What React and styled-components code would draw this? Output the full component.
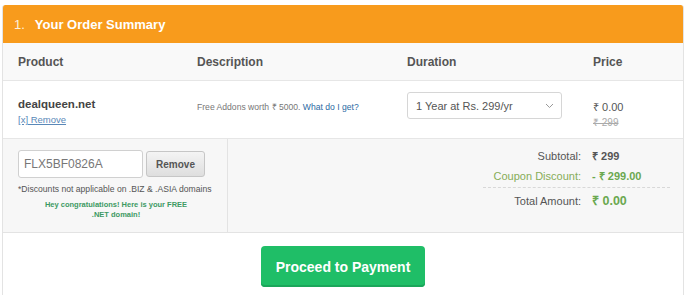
import styled, { createGlobalStyle } from "styled-components";

const GlobalStyle = createGlobalStyle`
  body {
    margin: 0;
    background: #fff;
    font-family: "Liberation Sans", Arial, sans-serif;
  }
`;

const Page = styled.div`
  padding: 5px 0 0 2px;
  width: 682px;
`;

const Card = styled.div`
  border: 1px solid #e3e3e3;
  border-top: 0;
  border-radius: 3px 3px 0 0;
  overflow: hidden;
`;

const Header = styled.div`
  height: 38px;
  background: #f89b1c;
  color: #fff;
  display: flex;
  align-items: center;
  padding-left: 12px;
  font-size: 13px;
  border-radius: 3px 3px 0 0;
  margin: 0 -1px;
`;

const Step = styled.span`
  opacity: 0.85;
  margin-right: 10px;
`;

const Title = styled.span`
  font-weight: bold;
`;

const Row = styled.div`
  display: grid;
  grid-template-columns: 179px 210px 186px 1fr;
  align-items: ${({ top }) => (top ? "start" : "center")};
  padding: ${({ top }) => (top ? "11px 0 0 15px" : "0 0 0 15px")};
  box-sizing: border-box;
  height: ${({ h }) => h}px;
  background: ${({ bg }) => bg || "#fff"};
  border-bottom: 1px solid #e6e6e6;
`;

const HeadCell = styled.div`
  font-size: 12px;
  font-weight: bold;
  color: #555;
`;

const Cell = styled.div`
  display: flex;
  flex-direction: column;
  margin-top: ${({ offset }) => offset || 0}px;
`;

const Domain = styled.div`
  font-size: 11.5px;
  font-weight: bold;
  color: #444;
`;

const SmallLink = styled.a`
  font-size: 9.5px;
  color: #5a88b8;
  text-decoration: underline;
  margin-top: 4px;
`;

const Desc = styled.div`
  font-size: 8.6px;
  color: #777;
  margin-top: 9px;
`;

const DescLink = styled.a`
  color: #2b6aa3;
`;

const Select = styled.div`
  width: 155px;
  height: 27px;
  box-sizing: border-box;
  border: 1px solid #d6d6d6;
  border-radius: 3px;
  display: flex;
  align-items: center;
  justify-content: space-between;
  padding: 0 7px 0 8px;
  font-size: 11px;
  color: #555;
  background: #fff;
`;

const Price = styled.div`
  font-size: 11px;
  color: #555;
`;

const OldPrice = styled.div`
  font-size: 10px;
  color: #aaa;
  text-decoration: line-through;
  margin-top: 1px;
`;

const CouponSection = styled.div`
  display: flex;
  height: 93px;
  background: #f7f7f7;
  border-bottom: 1px solid #e3e3e3;
`;

const CouponLeft = styled.div`
  width: 225px;
  box-sizing: border-box;
  border-right: 1px solid #e3e3e3;
  padding: 11px 0 0 15px;
`;

const CouponRow = styled.div`
  display: flex;
  align-items: center;
  gap: 3px;
`;

const CouponInput = styled.div`
  width: 125px;
  height: 28px;
  box-sizing: border-box;
  background: #fff;
  border: 1px solid #d0d0d0;
  border-radius: 3px;
  display: flex;
  align-items: center;
  padding-left: 5px;
  font-size: 12px;
  color: #777;
`;

const GrayButton = styled.button`
  width: 59px;
  height: 26px;
  border: 1px solid #c6c6c6;
  border-radius: 3px;
  background: linear-gradient(#f4f4f4, #dedede);
  font-family: inherit;
  font-size: 10px;
  font-weight: bold;
  color: #555;
  padding: 0;
`;

const Note = styled.div`
  font-size: 8.6px;
  color: #555;
  margin-top: 6px;
  white-space: nowrap;
`;

const Congrats = styled.div`
  width: 196px;
  text-align: center;
  font-size: 7.5px;
  font-weight: bold;
  color: #3d9a63;
  line-height: 10px;
  margin-top: 6px;
`;

const CouponRight = styled.div`
  flex: 1;
  display: flex;
  justify-content: flex-end;
  padding: 7px 13px 0 0;
`;

const Summary = styled.div`
  width: 187px;
  display: grid;
  grid-template-columns: 98px 78px;
  column-gap: 11px;
  align-content: start;
`;

const Label = styled.div`
  text-align: right;
  font-size: 11px;
  line-height: 20px;
  color: ${({ green }) => (green ? "#86ad57" : "#555")};
  white-space: nowrap;
`;

const Value = styled.div`
  font-size: ${({ big }) => (big ? "12.5px" : "11px")};
  line-height: 20px;
  font-weight: bold;
  color: ${({ green }) => (green ? "#6aa84f" : "#555")};
  white-space: nowrap;
`;

const Divider = styled.div`
  grid-column: 1 / -1;
  border-top: 1px dashed #d8d8d8;
  margin: 1px 0 3px;
`;

const Footer = styled.div`
  display: flex;
  justify-content: center;
  padding: 13px 0 20px;
`;

const PayButton = styled.button`
  width: 164px;
  height: 41px;
  border: 0;
  border-radius: 4px;
  background: #1fbe67;
  box-shadow: inset 0 -2px 0 #1aa65a;
  color: #fff;
  font-family: inherit;
  font-size: 14px;
  font-weight: bold;
`;

const Chevron = () => (
  <svg width="9" height="6" viewBox="0 0 9 6">
    <polyline points="1,1 4.5,4.5 8,1" fill="none" stroke="#999" strokeWidth="1" />
  </svg>
);

export default function App() {
  return (
    <>
      <GlobalStyle />
      <Page>
        <Card>
          <Header>
            <Step>1.</Step>
            <Title>Your Order Summary</Title>
          </Header>
          <Row h={38} bg="#f9f9f9">
            <HeadCell>Product</HeadCell>
            <HeadCell>Description</HeadCell>
            <HeadCell>Duration</HeadCell>
            <HeadCell>Price</HeadCell>
          </Row>
          <Row h={58} top>
            <Cell offset={6}>
              <Domain>dealqueen.net</Domain>
              <SmallLink>[x] Remove</SmallLink>
            </Cell>
            <Desc>
              Free Addons worth ₹ 5000. <DescLink>What do I get?</DescLink>
            </Desc>
            <Select>
              <span>1 Year at Rs. 299/yr</span>
              <Chevron />
            </Select>
            <Cell offset={7}>
              <Price>₹ 0.00</Price>
              <OldPrice>₹ 299</OldPrice>
            </Cell>
          </Row>
          <CouponSection>
            <CouponLeft>
              <CouponRow>
                <CouponInput>FLX5BF0826A</CouponInput>
                <GrayButton>Remove</GrayButton>
              </CouponRow>
              <Note>*Discounts not applicable on .BIZ &amp; .ASIA domains</Note>
              <Congrats>
                Hey congratulations! Here is your FREE
                <br />
                .NET domain!
              </Congrats>
            </CouponLeft>
            <CouponRight>
              <Summary>
                <Label>Subtotal:</Label>
                <Value>₹ 299</Value>
                <Label green>Coupon Discount:</Label>
                <Value green>- ₹ 299.00</Value>
                <Divider />
                <Label>Total Amount:</Label>
                <Value green big>₹ 0.00</Value>
              </Summary>
            </CouponRight>
          </CouponSection>
          <Footer>
            <PayButton>Proceed to Payment</PayButton>
          </Footer>
        </Card>
      </Page>
    </>
  );
}
